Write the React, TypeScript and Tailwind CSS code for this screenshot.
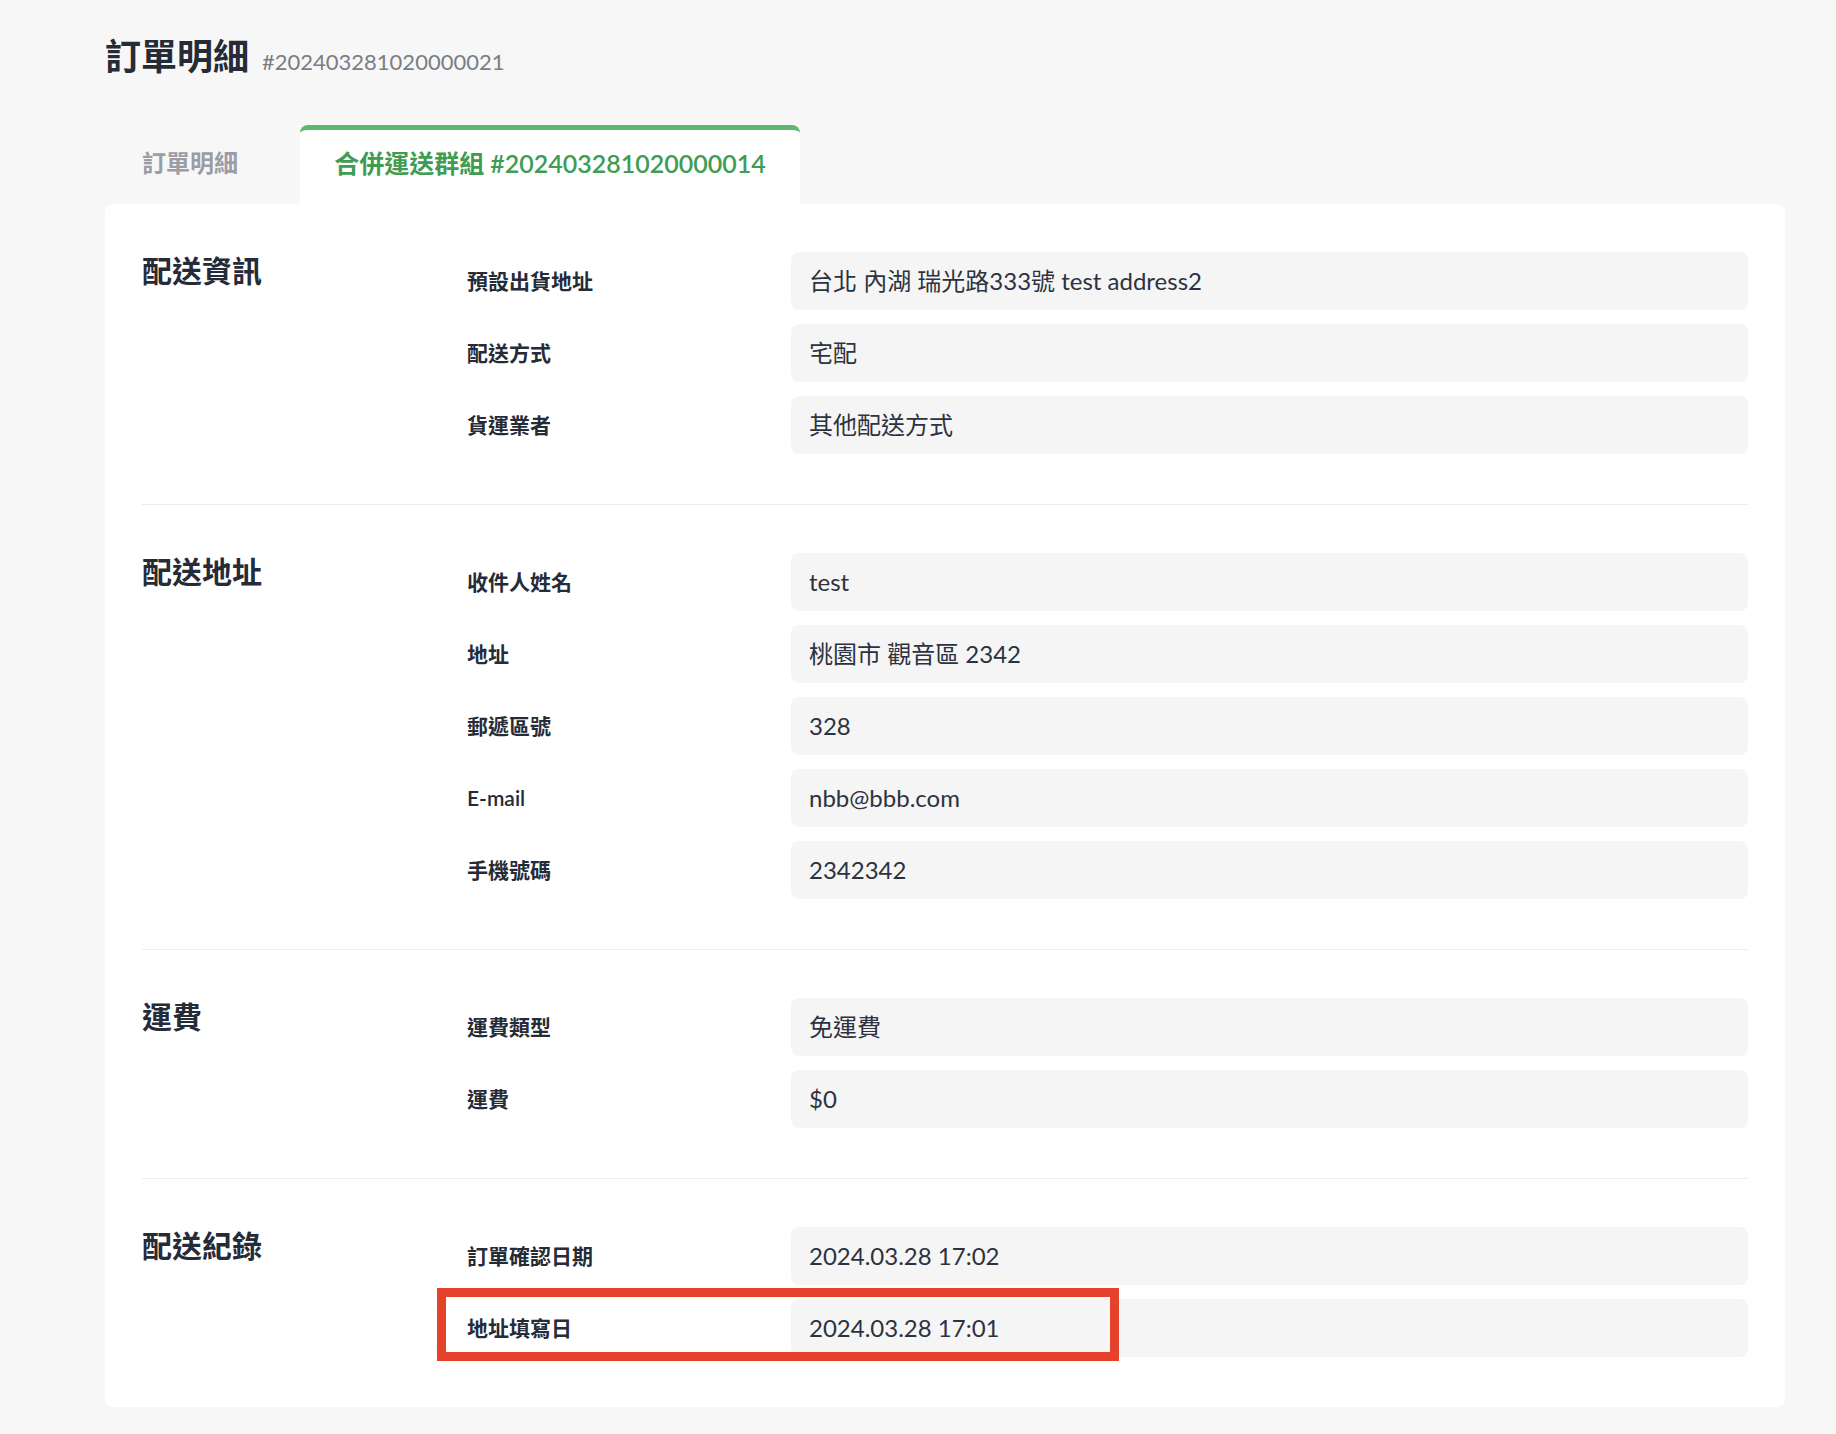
import React from "react";

const FONT = { fontFamily: "Lato, 'Noto Sans CJK TC', 'Noto Sans', sans-serif" };

type Row = { label: string; value: string; highlight?: boolean };
type Section = { title: string; rows: Row[] };

const sections: Section[] = [
  {
    title: "配送資訊",
    rows: [
      { label: "預設出貨地址", value: "台北 內湖 瑞光路333號 test address2" },
      { label: "配送方式", value: "宅配" },
      { label: "貨運業者", value: "其他配送方式" },
    ],
  },
  {
    title: "配送地址",
    rows: [
      { label: "收件人姓名", value: "test" },
      { label: "地址", value: "桃園市 觀音區 2342" },
      { label: "郵遞區號", value: "328" },
      { label: "E-mail", value: "nbb@bbb.com" },
      { label: "手機號碼", value: "2342342" },
    ],
  },
  {
    title: "運費",
    rows: [
      { label: "運費類型", value: "免運費" },
      { label: "運費", value: "$0" },
    ],
  },
  {
    title: "配送紀錄",
    rows: [
      { label: "訂單確認日期", value: "2024.03.28 17:02" },
      { label: "地址填寫日", value: "2024.03.28 17:01", highlight: true },
    ],
  },
];

export default function App() {
  return (
    <div className="min-h-screen bg-[#f7f7f7] pl-[105px] pt-[33px] pb-[28px] text-[#2a2f3d]" style={FONT}>
      <div className="flex items-baseline gap-[13px]">
        <h1 className="text-[36px] leading-[46px] font-bold text-[#262b38]">訂單明細</h1>
        <span className="text-[22px] text-[#7a7d84]">#202403281020000021</span>
      </div>

      <div className="mt-[46px] flex w-[1680px]">
        <div className="w-[195px] pl-[37px] pt-[22px] pb-[25px] text-[24px] leading-[32px] font-semibold text-[#9a9da5]">
          訂單明細
        </div>
        <div className="w-[500px] rounded-t-lg border-t-[5px] border-[#5cb86e] bg-white pt-[17px] pb-[25px] text-center text-[25px] leading-[32px] font-semibold text-[#3f9c52]">
          合併運送群組 #202403281020000014
        </div>
      </div>

      <div className="w-[1680px] rounded-b-lg rounded-tl-lg rounded-tr-lg bg-white px-[37px]">
        {sections.map((s, i) => (
          <div
            key={s.title}
            className={
              "flex pt-[48px] pb-[50px] " +
              (i < sections.length - 1 ? "border-b border-[#ececec]" : "")
            }
          >
            <div className="w-[325px] shrink-0 text-[30px] leading-[36px] font-bold text-[#262b38]">
              {s.title}
            </div>
            <div className="flex flex-1 flex-col gap-[14px]">
              {s.rows.map((r) => (
                <div key={r.label} className="relative flex h-[58px] items-center">
                  <div className="w-[324px] shrink-0 text-[21px] font-semibold text-[#262b38]">{r.label}</div>
                  <div className="flex h-full flex-1 items-center rounded-lg bg-[#f5f5f5] pl-[18px] text-[24px] text-[#2d3240]">
                    {r.value}
                  </div>
                  {r.highlight && (
                    <div className="pointer-events-none absolute left-[-30px] top-[-11px] h-[73px] w-[682px] border-[9px] border-[#e4422a]" />
                  )}
                </div>
              ))}
            </div>
          </div>
        ))}
      </div>
    </div>
  );
}
